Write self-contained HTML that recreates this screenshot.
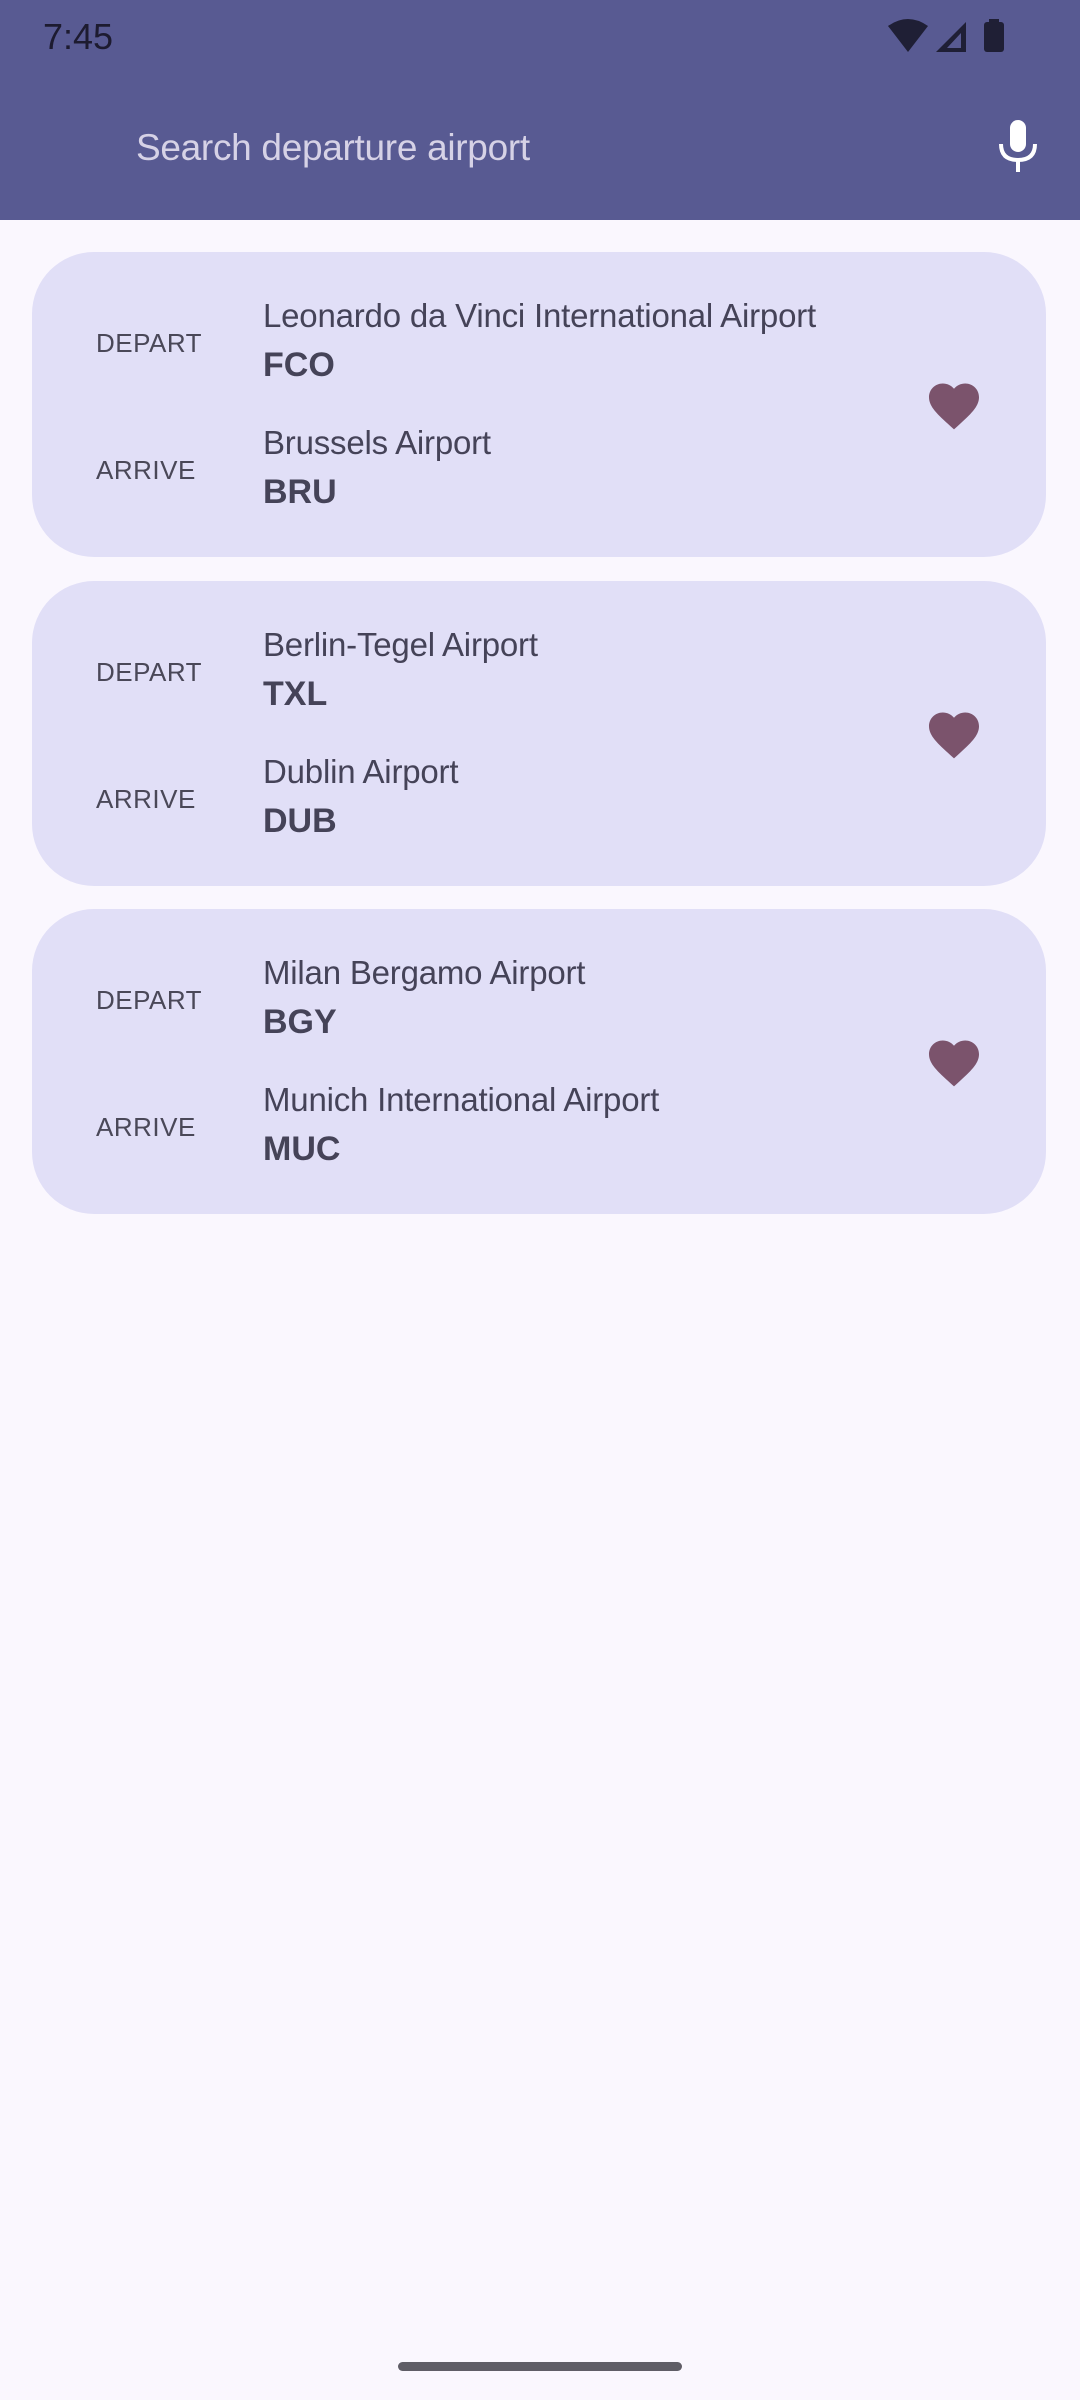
<!DOCTYPE html>
<html><head><meta charset="utf-8"><style>
*{margin:0;padding:0;box-sizing:border-box}
body{width:1080px;height:2400px;background:#faf7fe;font-family:"Liberation Sans",sans-serif;position:relative;overflow:hidden}
.top{position:absolute;left:0;top:0;width:1080px;height:220px;background:#585a92}
.time{position:absolute;left:43px;top:16px;font-size:36px;color:#1d1b30}
.search{position:absolute;left:136px;top:127px;font-size:37px;color:#d6d2e6;letter-spacing:-0.3px}
.card{position:absolute;left:32px;width:1014px;height:305px;background:#e1dff7;border-radius:62px}
.lbl{position:absolute;left:64px;font-size:26px;color:#4a4858;letter-spacing:.5px}
.nm{position:absolute;left:231px;font-size:33px;color:#454358;letter-spacing:-0.2px}
.cd{position:absolute;left:231px;font-size:34px;font-weight:bold;color:#454358}
.heart{position:absolute;left:892px;top:124px}
.home{position:absolute;left:398px;top:2362px;width:284px;height:9px;border-radius:5px;background:#5f5d66}
</style></head><body>
<div class="top">
<div class="time">7:45</div>
<svg style="position:absolute;left:888px;top:18px" width="120" height="36" viewBox="0 0 120 36">
<path d="M0 8 Q20 -6 40 8 L20 34 Z" fill="#1f1f35"/>
<path d="M48 34 L78 4 L78 34 Z M73 15 L73 30 L59 30 Z" fill="#1f1f35" fill-rule="evenodd"/>
<rect x="96" y="4" width="20" height="30" rx="3" fill="#1f1f35"/><rect x="101" y="1" width="10" height="4" fill="#1f1f35"/>
</svg>
<div class="search">Search departure airport</div>
<svg style="position:absolute;left:997px;top:118px" width="42" height="56" viewBox="0 0 42 56">
<rect x="13" y="2" width="16" height="32" rx="8" fill="#fff"/>
<path d="M4 26 Q4 42 21 42 Q38 42 38 26" stroke="#fff" stroke-width="4" fill="none"/>
<rect x="19" y="42" width="4" height="12" fill="#fff"/>
</svg>
</div>

<div class="card" style="top:252px">
<div class="lbl" style="top:76px">DEPART</div>
<div class="nm" style="top:45px">Leonardo da Vinci International Airport</div>
<div class="cd" style="top:94px">FCO</div>
<div class="lbl" style="top:203px">ARRIVE</div>
<div class="nm" style="top:172px">Brussels Airport</div>
<div class="cd" style="top:221px">BRU</div>
<svg class="heart" width="60" height="55" viewBox="0 0 24 22"><path d="M12 21.35l-1.45-1.32C5.4 15.36 2 12.28 2 8.5 2 5.42 4.42 3 7.5 3c1.74 0 3.41.81 4.5 2.09C13.09 3.81 14.76 3 16.5 3 19.58 3 22 5.42 22 8.5c0 3.78-3.4 6.86-8.55 11.54L12 21.35z" fill="#7b536c"/></svg>
</div>

<div class="card" style="top:581px">
<div class="lbl" style="top:76px">DEPART</div>
<div class="nm" style="top:45px">Berlin-Tegel Airport</div>
<div class="cd" style="top:94px">TXL</div>
<div class="lbl" style="top:203px">ARRIVE</div>
<div class="nm" style="top:172px">Dublin Airport</div>
<div class="cd" style="top:221px">DUB</div>
<svg class="heart" width="60" height="55" viewBox="0 0 24 22"><path d="M12 21.35l-1.45-1.32C5.4 15.36 2 12.28 2 8.5 2 5.42 4.42 3 7.5 3c1.74 0 3.41.81 4.5 2.09C13.09 3.81 14.76 3 16.5 3 19.58 3 22 5.42 22 8.5c0 3.78-3.4 6.86-8.55 11.54L12 21.35z" fill="#7b536c"/></svg>
</div>

<div class="card" style="top:909px">
<div class="lbl" style="top:76px">DEPART</div>
<div class="nm" style="top:45px">Milan Bergamo Airport</div>
<div class="cd" style="top:94px">BGY</div>
<div class="lbl" style="top:203px">ARRIVE</div>
<div class="nm" style="top:172px">Munich International Airport</div>
<div class="cd" style="top:221px">MUC</div>
<svg class="heart" width="60" height="55" viewBox="0 0 24 22"><path d="M12 21.35l-1.45-1.32C5.4 15.36 2 12.28 2 8.5 2 5.42 4.42 3 7.5 3c1.74 0 3.41.81 4.5 2.09C13.09 3.81 14.76 3 16.5 3 19.58 3 22 5.42 22 8.5c0 3.78-3.4 6.86-8.55 11.54L12 21.35z" fill="#7b536c"/></svg>
</div>

<div class="home"></div>
</body></html>
